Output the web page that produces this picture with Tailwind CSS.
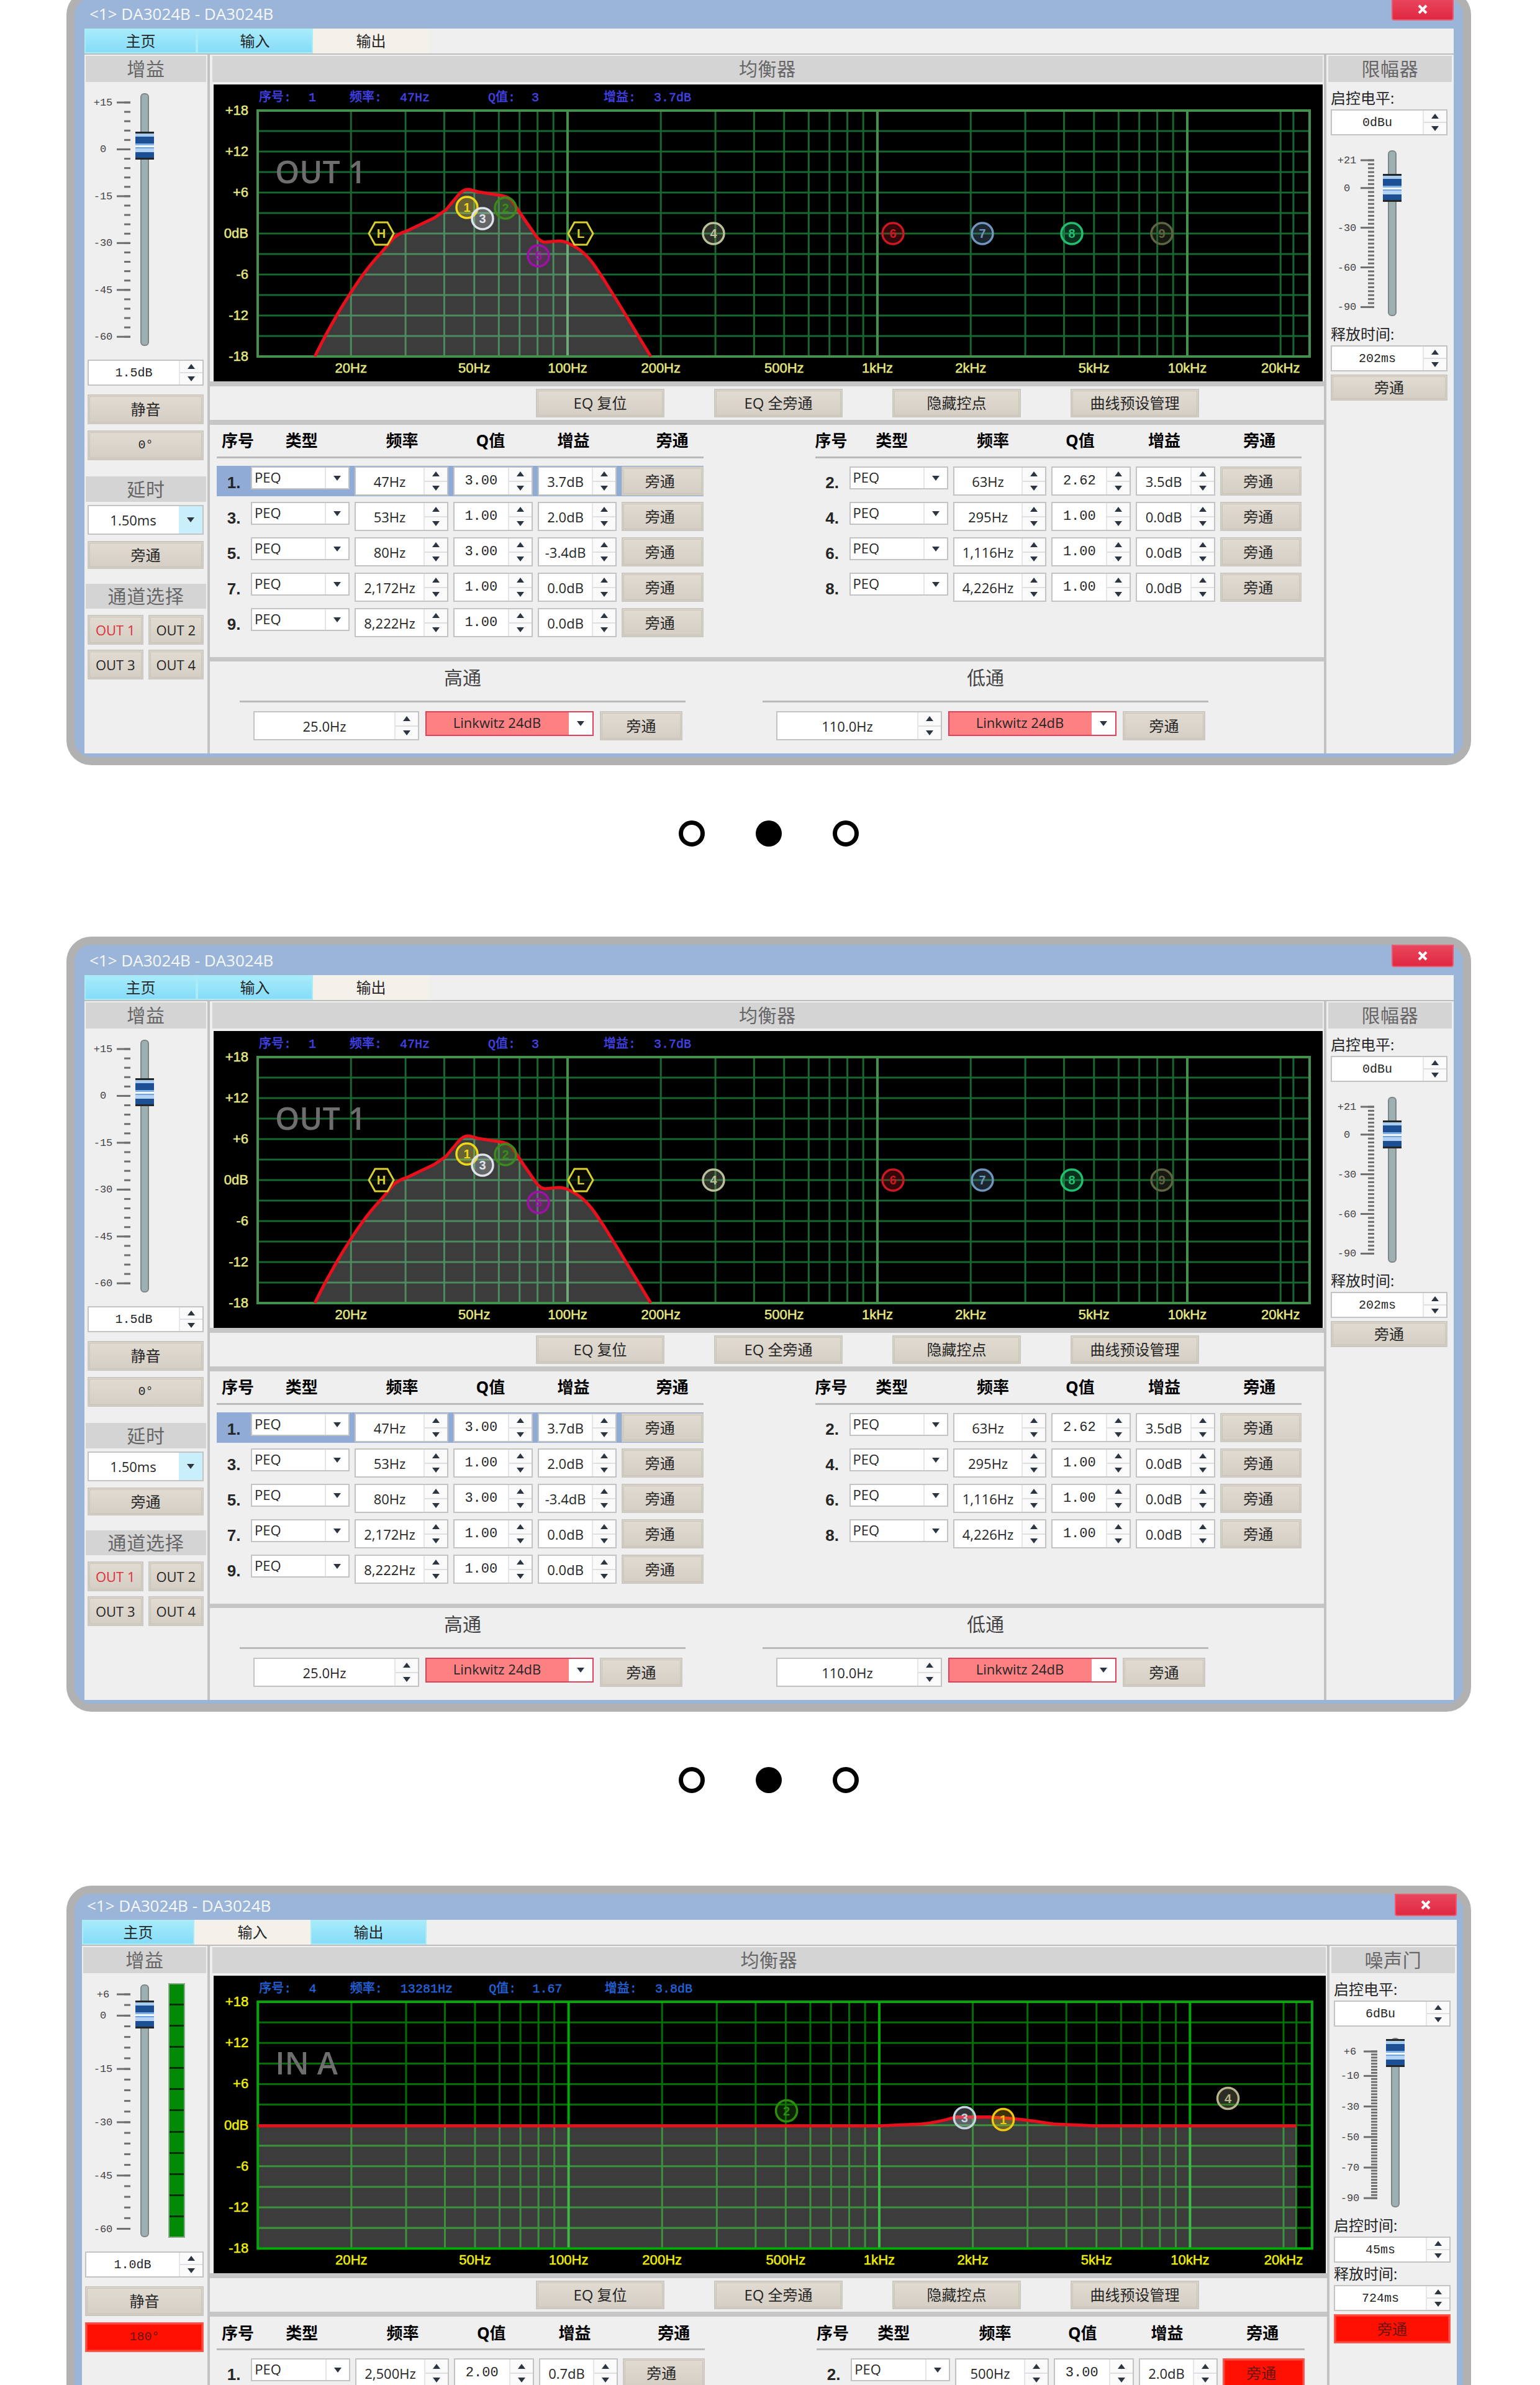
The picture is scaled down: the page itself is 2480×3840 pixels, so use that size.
<!DOCTYPE html>
<html lang="zh-CN">
<head>
<meta charset="utf-8">
<meta name="viewport" content="width=device-width, initial-scale=1">
<title>DA3024B</title>
<script src="https://cdn.jsdelivr.net/npm/@tailwindcss/browser@4"></script>
</head>
<body class="bg-white font-['Open_Sans','Noto_Sans_CJK_SC',sans-serif] text-[22px] leading-none text-neutral-800">
<main id="app" class="h-screen overflow-hidden pl-[107px] pr-[111px]"></main>

<script>
const BEVEL = 'border-2 border-[#cbc7c1] bg-linear-to-b from-[#e2dbd1] to-[#d5cec4] outline-1 -outline-offset-4 outline-[#c9c2b6] text-neutral-800';
const ALERT = 'border-2 border-[#ff5a4e] bg-[#ff1000] outline-2 -outline-offset-4 outline-[#ff3a30] text-[#6a1410]';
const MONO = "font-['Liberation_Mono','Noto_Sans_CJK_SC',monospace]";

const btn = (text, size, alert) =>
  `<button type="button" class="flex items-center justify-center whitespace-nowrap ${size} ${alert ? ALERT : BEVEL}">${text}</button>`;

const head = (text, extra = '') =>
  `<h2 class="flex items-center justify-center bg-[#d5d4d5] text-[30px] tracking-wide text-[#666] ${extra}">${text}</h2>`;

const up = '<svg viewBox="0 0 12 8" class="w-3 h-2"><path d="M6 0 12 8H0z" fill="#2c3540"/></svg>';
const down = '<svg viewBox="0 0 12 8" class="w-3 h-2"><path d="M0 0H12L6 8z" fill="#2c3540"/></svg>';

const spin = (value, label, size, font = '') => `
  <div class="flex border-2 border-[#c3c3c6] bg-white ${size}">
    <input type="text" value="${value}" aria-label="${label}" class="min-w-0 flex-1 text-center outline-none ${font}">
    <span class="flex w-[38px] shrink-0 flex-col border-l-2 border-[#e6e6ea]">
      <button type="button" aria-label="${label} +" class="flex flex-1 items-center justify-center bg-[#fafafb]">${up}</button>
      <button type="button" aria-label="${label} -" class="flex flex-1 items-center justify-center border-t-2 border-[#e0e0e4] bg-[#fafafb]">${down}</button>
    </span>
  </div>`;

const drop = (value, label, size, look, arrow) => `
  <div class="relative flex ${size}">
    <select aria-label="${label}" class="w-full appearance-none border-2 outline-none ${look}"><option>${value}</option></select>
    <span class="pointer-events-none absolute inset-y-0.5 right-0.5 flex w-[38px] items-center justify-center ${arrow}">${down}</span>
  </div>`;

/* Tick scale: y = y0 + (top - dB) * step */
function scale(s, w, x, labelX) {
  let out = '';
  for (let v = s.top; v >= s.bottom; v -= s.minor) {
    const y = s.y0 + (s.top - v) * s.step;
    out += `<path d="M${x} ${y}h10" stroke="#6f6f6f" stroke-width="3"/>`;
  }
  for (const v of s.major) {
    const y = s.y0 + (s.top - v) * s.step;
    out += `<path d="M${x - 12} ${y}h22" stroke="#6f6f6f" stroke-width="3"/>
      <text x="${labelX}" y="${y + 5}" text-anchor="middle">${v > 0 ? '+' + v : v}</text>`;
  }
  return `<svg viewBox="0 0 ${w} ${s.h}" style="width:${w}px;height:${s.h}px" class="shrink-0 fill-[#444] text-[17px] ${MONO}">${out}</svg>`;
}

const SLIDER = "shrink-0 appearance-none bg-transparent [writing-mode:vertical-lr] [direction:rtl] [&::-webkit-slider-runnable-track]:mx-auto [&::-webkit-slider-runnable-track]:w-[14px] [&::-webkit-slider-runnable-track]:rounded-md [&::-webkit-slider-runnable-track]:border-2 [&::-webkit-slider-runnable-track]:border-[#808588] [&::-webkit-slider-runnable-track]:bg-[#9cb0b2] [&::-webkit-slider-thumb]:appearance-none [&::-webkit-slider-thumb]:h-[45px] [&::-webkit-slider-thumb]:w-[30px] [&::-webkit-slider-thumb]:-ml-[10px] [&::-webkit-slider-thumb]:bg-[linear-gradient(#a9cdf0_0_14%,#1d4f94_14%_40%,#7fb0e6_40%_48%,#f4f9ff_48%_56%,#6fa4e0_56%_62%,#b4d3f5_62%_76%,#1d4f94_76%_100%)] [&::-webkit-slider-thumb]:border-x-3 [&::-webkit-slider-thumb]:border-y-0 [&::-webkit-slider-thumb]:border-l-[#a9cdf0] [&::-webkit-slider-thumb]:border-r-[#2a5fa8]";

/* EQ response plot */
const fx = (f, dec) => 415 + dec * Math.log10(f / 10);
function plot(w) {
  const T = 178, B = 574, R = w.right;
  let g = '', bold = '';
  for (let i = 1; i < 12; i++) g += `M415 ${T + i * 33}H${R}`;
  for (const base of [10, 100, 1000]) for (let k = 2; k < 10; k++) g += `M${fx(base * k, w.dec)} ${T}V${B}`;
  for (const f of [20000, 22000]) g += `M${fx(f, w.dec)} ${T}V${B}`;
  for (const f of [100, 1000, 10000]) bold += `M${fx(f, w.dec)} ${T}V${B}`;
  const yl = ['+18', '+12', '+6', '0dB', '-6', '-12', '-18'].map((t, i) =>
    `<text x="400" y="${T + i * 66 + 7}" text-anchor="end">${t}</text>`).join('');
  const xl = [[20, '20Hz'], [50, '50Hz'], [100, '100Hz'], [200, '200Hz'], [500, '500Hz'], [1000, '1kHz'], [2000, '2kHz'], [5000, '5kHz'], [10000, '10kHz'], [20000, '20kHz']]
    .map(([f, t]) => `<text x="${fx(f, w.dec)}" y="600" text-anchor="middle">${t}</text>`).join('');
  const info = [[417, '序号:'], [497, w.info[0]], [563, '频率:'], [644, w.info[1]], [786, 'Q值:'], [856, w.info[2]], [972, '增益:'], [1053, w.info[3]]]
    .map(([x, t]) => `<text x="${x}" y="163">${t}</text>`).join('');
  const pts = w.points.map(([t, x, y, c]) => (/[HL]/.test(t)
    ? `<path d="M${x - 20} ${y}l10 -18h20l10 18l-10 18h-20z" fill="#0b0b00" fill-opacity=".6" stroke="${c}" stroke-width="3"/>`
    : `<circle cx="${x}" cy="${y}" r="17" fill="${c}" fill-opacity=".25" stroke="${c}" stroke-width="3.5"/>`) +
    `<text x="${x}" y="${y + 7}" text-anchor="middle" fill="${c}">${t}</text>`).join('');
  return `<svg viewBox="344 136 1786 478" role="img" aria-label="${w.channel} EQ" class="block h-auto w-full bg-black">
    <path d="${g}" fill="none" stroke="${w.grid}" stroke-width="3"/>
    <path d="${bold}" fill="none" stroke="${w.frame}" stroke-width="4"/>
    <path d="M${w.curve} V574H${w.start}z" fill="#ffffff" fill-opacity=".235"/>
    <path d="M415 ${T}H${R}V${B}H415z" fill="none" stroke="${w.frame}" stroke-width="4"/>
    <path d="M${w.curve}" fill="none" stroke="#e8101c" stroke-width="5" stroke-linejoin="round"/>
    <text x="443" y="295" class="fill-[#6e6e6e] text-[50px] font-semibold">${w.channel}</text>
    <g class="${w.axis} text-[22px] font-['Liberation_Sans',sans-serif]" stroke-width=".5">${yl}${xl}</g>
    <g class="${w.infoColor} text-[20px] ${MONO}" stroke-width=".5">${info}</g>
    <g class="text-[20px] font-bold font-['Liberation_Sans',sans-serif]">${pts}</g>
  </svg>`;
}

/* Filter band tables */
const PAD = [['pr-1', 'pr-1.5', 'pr-4', 'pr-5', 'pl-8'], ['pr-[30px]', 'pr-[30px]', 'pr-11', 'pr-11', 'pr-1']];
function bands(rows, side) {
  const heads = ['类型', '频率', 'Q值', '增益', '旁通'].map((t, i) => `<th class="p-0 text-center font-bold ${PAD[side][i]}">${t}</th>`).join('');
  const body = rows.map(([n, f, q, g, sel, alert]) => {
    const c = sel ? 'bg-[#8fabd6]' : '';
    const box = `flex h-[49px] pt-px pr-2 ${c}`;
    return `<tr>
      <th scope="row" class="h-[57px] p-0 align-top"><div class="flex h-[49px] items-center justify-center pt-1 text-[26px] font-bold font-['Liberation_Sans',sans-serif] ${c}">${n}.</div></th>
      <td class="p-0 align-top"><div class="${box}">${drop('PEQ', '类型 ' + n, 'h-[37px] w-full', 'border-[#c3c3c6] bg-white pl-1 pb-1', 'border-l-2 border-[#e6e6ea] bg-white')}</div></td>
      <td class="p-0 align-top"><div class="${box}">${spin(f, '频率 ' + n, 'h-[47px] w-full')}</div></td>
      <td class="p-0 align-top"><div class="${box}">${spin(q, 'Q值 ' + n, 'h-[47px] w-full', MONO)}</div></td>
      <td class="p-0 align-top"><div class="${box}">${spin(g, '增益 ' + n, 'h-[47px] w-full')}</div></td>
      <td class="p-0 align-top"><div class="flex h-[49px] pt-px ${c}">${btn('旁通', 'h-[47px] w-full pr-2 text-[24px]', alert)}</div></td>
    </tr>`;
  }).join('');
  return `<div class="min-w-0 flex-1"><table class="w-full table-fixed border-collapse">
    <colgroup><col class="w-[55px]"><col class="w-[167px]"><col class="w-[158px]"><col class="w-[136px]"><col class="w-[135px]"><col class="w-[131px]"></colgroup>
    <thead><tr class="h-[52px] border-b-3 border-[#b9b9b9] text-[26px] whitespace-nowrap text-black"><th class="p-0 text-left font-bold ${side ? '' : 'pl-2'}">序号</th>${heads}</tr>
    <tr class="h-3.5"><td colspan="6" class="p-0"></td></tr></thead>
    <tbody>${body}</tbody></table></div>`;
}

const pass = (title, f) => `
  <section class="w-[718px]">
    <h3 class="flex h-[66px] items-center justify-center border-b-3 border-[#b9b9b9] pb-3 text-[30px] text-[#444]">${title}</h3>
    <div class="flex items-start gap-2.5 pt-3.5 pl-[22px]">
      ${spin(f, title + '频率', 'h-[47px] w-[267px]')}
      ${drop('Linkwitz 24dB', title + '类型', 'h-10 w-[271px]', 'border-[#e0405a] bg-[#fd8083] text-center pr-[40px] pb-1', 'bg-white')}
      ${btn('旁通', 'h-[47px] w-[133px] text-[24px]')}
    </div>
  </section>`;

const TAB = { on: 'border-2 border-[#a9ecf6] bg-linear-to-b from-[#a6ebfb] to-[#86dcf8]', off: 'bg-[#f4f0ea]' };

function win(w) {
  const tabs = ['主页', '输入', '输出'].map((t, i) =>
    `<button type="button" class="flex h-10 ${i ? 'w-[187px]' : 'w-[181px]'} items-center justify-center text-[24px] text-neutral-800 ${w.tabs[i] ? TAB.on : TAB.off}">${t}</button>`).join('');
  const right = w.times.map(([t, v]) => `<p class="flex h-9 items-center text-[24px]">${t}:</p>${spin(v, t, 'h-[42px]', MONO + ' text-[20px]')}`).join('');
  return `
  <article class="rounded-[40px] border-[13px] border-[#b1b1b1] bg-[#9bb5d8] pb-1.5 ${w.pad}">
    <header class="flex items-start justify-between ${w.bar}">
      <h1 class="flex h-full items-center pl-2 text-[26px] text-white/90">&lt;1&gt; DA3024B - DA3024B</h1>
      <button type="button" aria-label="关闭" class="flex h-9 w-[100px] items-center justify-center rounded-b-sm border-2 border-[#f0566c] bg-linear-to-b from-[#e8455c] to-[#e02742]">
        <svg viewBox="0 0 18 16" class="h-4 w-[18px]"><path d="M3 2l12 12M15 2L3 14" stroke="#fff" stroke-width="4"/></svg>
      </button>
    </header>
    <div class="bg-[#efeff0]">
      <nav class="flex border-b-2 border-[#bdbdbd] box-content">${tabs}</nav>
      <div class="flex">
        <aside class="shrink-0 border-r-4 border-[#c2c2c4] ${w.leftW}">
          ${head('增益', 'mt-0.5 mx-0.5 h-[42px]')}
          <div class="flex flex-col pl-[5px] pr-1.5">
            <div class="flex justify-end pr-[30px]">
              ${scale(w.gain, 77, 65, 31)}
              <input type="range" aria-label="增益" min="-62" max="${w.gain.top}" step="0.5" value="${w.gain.value}" class="mt-[18px] ml-1.5 h-[407px] w-[30px] ${SLIDER}">
              <div class="mt-4 ml-[23px] flex h-[410px] w-[27px] shrink-0 flex-col ${w.meter ? 'gap-[3px] border-2 border-[#8aa88a] bg-[#033003]' : ''}">${w.meter ? '<i class="flex-1 bg-[#008a06]"></i>'.repeat(12) : ''}</div>
            </div>
            ${spin(w.gain.text, '增益', 'h-[42px]', MONO + ' text-[20px]')}
            ${btn('静音', 'mt-3.5 h-12 text-[24px]')}
            ${btn(w.phase, 'mt-2.5 h-12 ' + MONO + ' text-[20px]', w.phase === '180°')}
          </div>
          ${w.outs ? `
          ${head('延时', 'mt-[26px] mx-0.5 h-[41px]')}
          <div class="flex flex-col pl-[5px] pr-1.5">
            ${drop('1.50ms', '延时', 'mt-[5px] h-12', 'border-[#c3c3c6] bg-white text-center pr-[40px]', 'bg-[#c9effb]')}
            ${btn('旁通', 'mt-2.5 h-[45px] text-[24px]')}
          </div>
          ${head('通道选择', 'mt-6 mx-0.5 h-10')}
          <div class="mt-2.5 grid grid-cols-2 gap-2 pl-[5px] pr-1.5">
            ${w.outs.map((o, i) => btn(`<span class="${i ? '' : 'text-[#e0303a]'}">${o}</span>`, 'h-12')).join('')}
          </div>` : ''}
        </aside>
        <div class="min-w-0 flex-1 border-r-4 border-[#c2c2c4]">
          ${head('均衡器', 'mt-0.5 ml-1 mr-0.5 mb-1 h-[42px]')}
          <div class="pl-1.5 pr-0.5">${plot(w)}</div>
          <div class="flex h-[70px] items-center gap-20 border-y-8 border-[#c6c6c6] pl-[525px] text-[24px]">
            ${['EQ 复位', 'EQ 全旁通', '隐藏控点', '曲线预设管理'].map(t => btn(t, 'h-[46px] w-[207px]')).join('')}
          </div>
          <div class="flex h-[374px] items-start gap-[180px] pl-[11px] pr-9">${bands(w.odd, 0)}${bands(w.even, 1)}</div>
          <div class="flex h-[155px] gap-[124px] border-t-[7px] border-[#c6c6c6] pl-12">${pass('高通', '25.0Hz')}${pass('低通', '110.0Hz')}</div>
        </div>
        <aside class="w-[205px] shrink-0">
          ${head(w.side, 'mt-0.5 mx-[3px] mb-2 h-[42px]')}
          <div class="flex flex-col pl-[7px] pr-2.5">
            <p class="flex h-9 items-center text-[24px]">启控电平:</p>
            ${spin(w.level, '启控电平', 'h-[42px]', MONO + ' text-[20px]')}
            <div class="flex">
              ${scale(w.thr, 70, 60, 26)}
              <input type="range" aria-label="启控电平" min="-100" max="${w.thr.top}" value="${w.thr.value}" class="ml-3.5 w-[30px] ${w.thrSize} ${SLIDER}">
            </div>
            ${right}
            ${btn('旁通', 'mt-[5px] text-[24px] ' + (w.alert ? 'h-[47px]' : 'h-[42px]'), w.alert)}
          </div>
        </aside>
      </div>
    </div>
  </article>`;
}

const out1 = {
  pad: 'pl-4 pr-[15px]', bar: 'h-[49px]', leftW: 'w-[202px]', tabs: [1, 1, 0],
  channel: 'OUT 1', info: ['1', '47Hz', '3', '3.7dB'], infoColor: 'fill-[#4444e6] stroke-[#4444e6]', axis: 'fill-[#e6e884] stroke-[#e6e884]',
  grid: '#17672f', frame: '#43924c', right: 2109, dec: 499, start: 507,
  curve: '507 574Q533 520 565 471Q590 432 613 408L634 383Q642 376 655 372L699 351L718 338L738 314Q746 304 756 305L770 309L809 315Q822 318 827 327L843 351L859 374Q868 389 877 390L899 388Q910 388 918 393Q940 403 957 427L973 451L996 488L1048 574',
  points: [['H', 614, 376, '#d8d030'], ['2', 814, 335, '#3a8a1c'], ['1', 752, 334, '#f0d818'], ['3', 777, 352, '#dfe3ea'], ['5', 867, 412, '#a010a8'], ['L', 935, 376, '#d8d030'],
    ['4', 1149, 376, '#b9c09a'], ['6', 1438, 376, '#cc1822'], ['7', 1582, 376, '#6f96bf'], ['8', 1726, 376, '#20c070'], ['9', 1871, 376, '#5d6440']],
  gain: { top: 15, bottom: -60, minor: 3, major: [15, 0, -15, -30, -45, -60], y0: 33, step: 5.03, h: 447, value: 2, text: '1.5dB' },
  phase: '0°', outs: ['OUT 1', 'OUT 2', 'OUT 3', 'OUT 4'], side: '限幅器', level: '0dBu',
  thr: { top: 21, bottom: -90, minor: 3, major: [21, 0, -30, -60, -90], y0: 40, step: 2.13, h: 302, value: 1 }, thrSize: 'mt-6 h-[267px]',
  times: [['释放时间', '202ms']],
  odd: [[1, '47Hz', '3.00', '3.7dB', 1], [3, '53Hz', '1.00', '2.0dB'], [5, '80Hz', '3.00', '-3.4dB'], [7, '2,172Hz', '1.00', '0.0dB'], [9, '8,222Hz', '1.00', '0.0dB']],
  even: [[2, '63Hz', '2.62', '3.5dB'], [4, '295Hz', '1.00', '0.0dB'], [6, '1,116Hz', '1.00', '0.0dB'], [8, '4,226Hz', '1.00', '0.0dB']]
};
const inA = {
  ...out1, pad: 'mt-[149px] pl-3 pr-[10px]', bar: 'h-[42px] pb-1', leftW: 'w-[206px]', tabs: [1, 0, 1],
  channel: 'IN A', info: ['4', '13281Hz', '1.67', '3.8dB'], infoColor: 'fill-[#2563d8] stroke-[#2563d8]', axis: 'fill-[#f0f000] stroke-[#f0f000]',
  grid: '#007000', frame: '#00a808', right: 2108, start: 415,
  curve: '415 377L1414 377L1482 374Q1510 371 1535 363L1592 363Q1640 365 1692 374L1759 377L2083 377',
  points: [['2', 1264, 353, '#2c8c0c'], ['3', 1550, 364, '#c4d4e0'], ['1', 1612, 367, '#f0c810'], ['4', 1973, 333, '#b8b48c']],
  gain: { top: 6, bottom: -60, minor: 3, major: [6, 0, -15, -30, -45, -60], y0: 34, step: 5.72, h: 448, value: 1.5, text: '1.0dB' }, meter: true,
  phase: '180°', outs: null, side: '噪声门', level: '6dBu',
  thr: { top: 6, bottom: -90, minor: 2, major: [6, -10, -30, -50, -70, -90], y0: 40, step: 2.46, h: 302, value: 6 }, thrSize: 'mt-[18px] h-[273px]',
  times: [['启控时间', '45ms'], ['释放时间', '724ms']], alert: true,
  odd: [[1, '2,500Hz', '2.00', '0.7dB']], even: [[2, '500Hz', '3.00', '2.0dB', 0, 1]]
};
const dots = `<nav aria-label="轮播" class="mt-[89px] mb-[145px] flex justify-center gap-[82px]">
  <button type="button" aria-label="1" class="size-[42px] rounded-full border-[7px] border-black"></button>
  <button type="button" aria-label="2" class="size-[42px] rounded-full bg-black"></button>
  <button type="button" aria-label="3" class="size-[42px] rounded-full border-[7px] border-black"></button>
</nav>`;

document.getElementById('app').innerHTML =
  `<div class="-mt-4">${win(out1)}${dots}${win(out1)}${dots}${win(inA)}</div>`;
</script>
</body>
</html>
